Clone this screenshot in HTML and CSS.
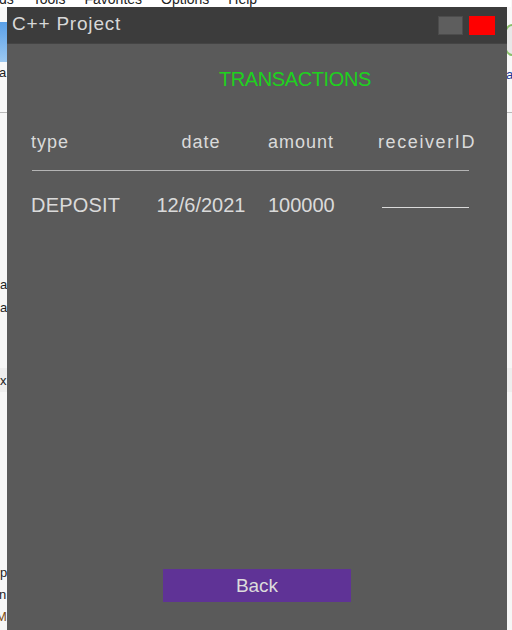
FILE: index.html
```html
<!DOCTYPE html>
<html>
<head>
<meta charset="utf-8">
<link rel="stylesheet" href="styles.css">
</head>
<body>
<div class="desk">
  <div class="menu"><span>ds</span><span>Tools</span><span>Favorites</span><span>Options</span><span>Help</span></div>
  <div class="frag blueicon"></div>
  <div class="frag greenicon"></div>
  <div class="frag rule"></div>
  <div class="frag panel"></div>
  <div class="frag band"></div>
  <span class="frag txt l1">a</span>
  <span class="frag txt l2">a</span>
  <span class="frag txt l3">a</span>
  <span class="frag txt l4">x</span>
  <span class="frag txt l5">p</span>
  <span class="frag txt l6">n</span>
  <span class="frag txt l7">Ma</span>
  <span class="frag txt r1">a</span>
</div>

<div class="window">
  <div class="titlebar">
    <span class="title">C++ Project</span>
    <div class="controls">
      <span class="ctl min"></span>
      <span class="ctl close"></span>
    </div>
  </div>
  <div class="content">
    <h1 class="heading">TRANSACTIONS</h1>
    <div class="table">
      <div class="row head">
        <span class="c1">type</span>
        <span class="c2">date</span>
        <span class="c3">amount</span>
        <span class="c4">receiverID</span>
      </div>
      <div class="divider"></div>
      <div class="row data">
        <span class="c1">DEPOSIT</span>
        <span class="c2">12/6/2021</span>
        <span class="c3">100000</span>
        <span class="c4"><span class="blank"></span></span>
      </div>
    </div>
    <button class="back">Back</button>
  </div>
</div>
</body>
</html>
```
FILE: styles.css
```css
html, body {
  margin: 0;
  padding: 0;
}
body {
  width: 512px;
  height: 630px;
  overflow: hidden;
  position: relative;
  background: #f7f7f7;
  font-family: "Liberation Sans", Arial, sans-serif;
}

/* background desktop fragments */
.desk {
  position: absolute;
  inset: 0;
  background: #f8f8f8;
}
.menu {
  position: absolute;
  top: -9px;
  left: -1px;
  display: flex;
  gap: 19px;
  font-size: 14px;
  color: #222;
  background: #fff;
  width: 512px;
  height: 16px;
}
.frag {
  position: absolute;
}
.blueicon {
  left: 0;
  top: 22px;
  width: 7px;
  height: 40px;
  background: linear-gradient(#5aa0e8, #9cc8f0);
}
.greenicon {
  left: 503px;
  top: 24px;
  width: 14px;
  height: 28px;
  border-radius: 50%;
  border: 2px solid #8ac06a;
  background: #e8e8e8;
}
.rule {
  left: 0;
  top: 112px;
  width: 512px;
  height: 1px;
  background: #b8b8b8;
}
.panel {
  left: 0;
  top: 113px;
  width: 512px;
  height: 517px;
  background: #f6f6f6;
}
.band {
  left: 0;
  top: 368px;
  width: 512px;
  height: 24px;
  background: #eeeeee;
}
.txt {
  font-family: "Liberation Sans", Arial, sans-serif;
  font-size: 13px;
  color: #222;
  line-height: 14px;
}
.l1 { left: -1px; top: 66px; }
.l2 { left: 0; top: 278px; }
.l3 { left: 0; top: 301px; }
.l4 { left: 0; top: 374px; }
.l5 { left: 0; top: 566px; }
.l6 { left: -1px; top: 588px; }
.l7 { left: -4px; top: 610px; color: #7a4a10; }
.r1 { left: 506px; top: 68px; color: #1a3a9a; }

/* window */
.window {
  position: absolute;
  left: 7px;
  top: 7px;
  width: 500px;
  height: 623px;
  display: flex;
  flex-direction: column;
}
.titlebar {
  height: 37px;
  flex: none;
  background: #3c3c3c;
  display: flex;
  align-items: center;
  padding: 0 12px 0 5px;
  border-bottom: 1px solid #444;
  box-sizing: border-box;
}
.title {
  color: #d8d8d8;
  font-size: 19px;
  letter-spacing: 0.8px;
  margin-top: -2px;
}
.controls {
  margin-left: auto;
  display: flex;
  gap: 6px;
}
.ctl {
  display: block;
  width: 25px;
  height: 19px;
  box-sizing: border-box;
}
.ctl.min {
  background: #5e5e5e;
  border: 1px solid #4c4c4c;
}
.ctl.close {
  width: 26px;
  background: #ff0000;
}

.content {
  flex: 1;
  background: #5a5a5a;
  display: flex;
  flex-direction: column;
  padding-top: 23px;
}
.heading {
  margin: 0 0 0 212px;
  font-weight: normal;
  font-size: 20px;
  line-height: 24px;
  letter-spacing: -0.4px;
  color: #1ed21e;
}
.table {
  margin: 40px 0 0 24px;
  color: #dadada;
}
.row {
  display: grid;
  grid-template-columns: 120px 100px 125px 102px;
}
.row span {
  white-space: nowrap;
}
.head {
  font-size: 18px;
  line-height: 22px;
  letter-spacing: 1px;
}
.data {
  font-size: 20px;
  line-height: 24px;
}
.c2, .c4 {
  text-align: center;
}
.c3 {
  padding-left: 17px;
}
.head .c4 {
  letter-spacing: 1.6px;
}
.divider {
  width: 437px;
  height: 1px;
  margin: 17px 0 0 1px;
  background: #b4b4b4;
}
.data {
  margin-top: 22px;
}
.data .c1 {
  letter-spacing: 0.2px;
}
.blank {
  display: block;
  width: 87px;
  height: 1px;
  margin: 14px 0 0 6px;
  background: #dadada;
}
.back {
  margin: auto auto 28px auto;
  width: 188px;
  height: 33px;
  border: none;
  background: #5f3396;
  color: #dcdcdc;
  font-family: "Liberation Sans", Arial, sans-serif;
  font-size: 19px;
  padding: 0;
  cursor: pointer;
}
```
